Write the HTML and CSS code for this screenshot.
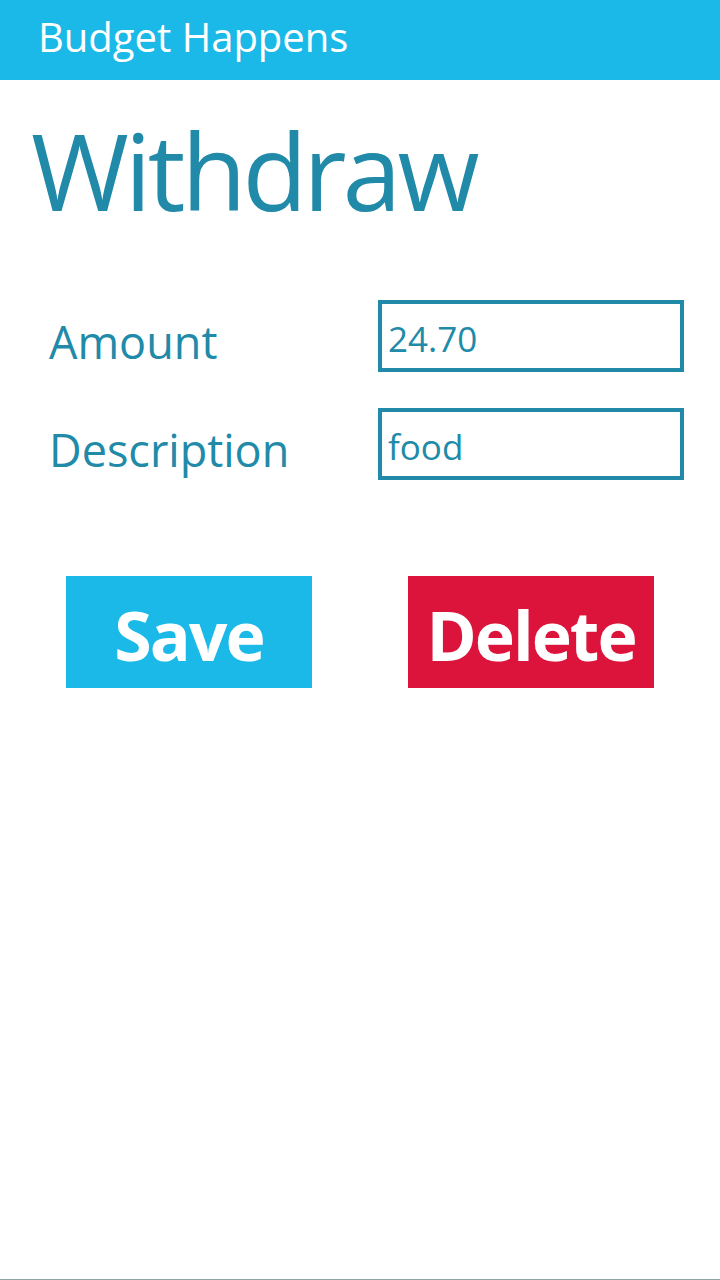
FILE: index.html
```html
<!DOCTYPE html>
<html>
<head>
<meta charset="utf-8">
<link rel="stylesheet" href="styles.css">
</head>
<body>
<div class="page">
  <header class="appbar"><span class="app-title">Budget Happens</span></header>
  <main class="content">
    <h1 class="page-title">Withdraw</h1>
    <div class="form">
      <div class="row">
        <label class="label">Amount</label>
        <input class="field" type="text" value="24.70">
      </div>
      <div class="row">
        <label class="label">Description</label>
        <input class="field" type="text" value="food">
      </div>
    </div>
    <div class="actions">
      <button class="btn btn-save">Save</button>
      <button class="btn btn-delete">Delete</button>
    </div>
  </main>
</div>
</body>
</html>
```
FILE: styles.css
```css
html, body {
  margin: 0;
  padding: 0;
  background: #ffffff;
}
.page {
  height: 1280px;
  box-sizing: border-box;
  border-bottom: 1px solid #8fa5a5;
  font-family: "Open Sans", "Noto Sans", sans-serif;
  color: #208aa8;
}
.appbar {
  height: 80px;
  background: #1ab9e8;
  box-sizing: border-box;
  padding-left: 38px;
  display: flex;
  align-items: center;
}
.app-title {
  color: #ffffff;
  font-size: 40px;
  line-height: 1;
  margin-top: -7px;
}
.page-title {
  margin: 0;
  padding: 30px 0 0 31px;
  font-weight: 400;
  font-size: 106px;
  letter-spacing: -4px;
  line-height: 120px;
  height: 120px;
}
.form {
  margin-top: 70px;
  display: flex;
  flex-direction: column;
  gap: 36px;
  padding-left: 49px;
}
.row {
  display: flex;
  align-items: center;
  height: 72px;
}
.label {
  width: 329px;
  font-size: 45px;
  line-height: 72px;
  padding-top: 12px;
}
.field {
  width: 306px;
  height: 72px;
  box-sizing: border-box;
  border: 4px solid #208aa8;
  padding: 4px 0 0 6px;
  margin: 0;
  font-family: "Open Sans", "Noto Sans", sans-serif;
  font-size: 35px;
  color: #208aa8;
  background: #ffffff;
  outline: none;
}
.actions {
  margin-top: 96px;
  display: flex;
  gap: 96px;
  padding-left: 66px;
}
.btn {
  width: 246px;
  height: 112px;
  border: none;
  padding: 4px 0 0 0;
  color: #ffffff;
  font-family: "Open Sans", "Noto Sans", sans-serif;
  font-weight: 700;
  font-size: 68px;
  letter-spacing: -2px;
}
.btn-save {
  background: #1ab9e8;
}
.btn-delete {
  background: #dc143c;
}
```
